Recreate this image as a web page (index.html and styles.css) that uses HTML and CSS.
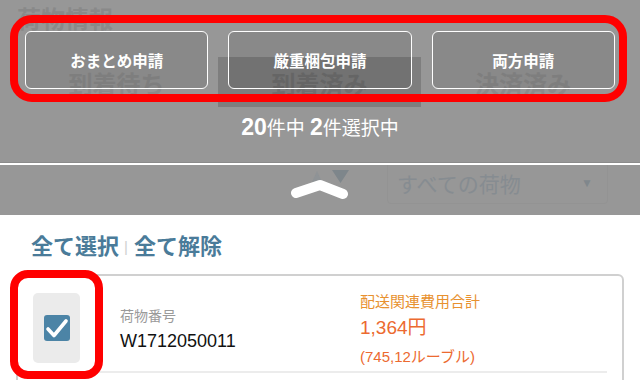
FILE: index.html
```html
<!DOCTYPE html>
<html lang="ja">
<head>
<meta charset="utf-8">
<title>荷物情報</title>
<link rel="stylesheet" href="styles.css">
</head>
<body>
<div class="page">
  <section class="top">
    <div class="ghost">
      <h1 class="ghost-title">荷物情報</h1>
      <div class="ghost-tabs">
        <div class="ghost-tab">到着待ち</div>
        <div class="ghost-tab active">到着済み</div>
        <div class="ghost-tab">決済済み</div>
      </div>
      <div class="ghost-filter">
        <svg class="sort-icon" width="40" height="16" viewBox="0 0 40 16">
          <polygon points="0,12 5,1 10,12" fill="#8f9396"/>
          <polygon points="20,0 37,0 28.5,13" fill="#7e868b"/>
        </svg>
        <div class="ghost-select">
          <span>すべての荷物</span>
          <span class="ghost-caret">▼</span>
        </div>
      </div>
    </div>
    <div class="overlay">
      <div class="actions">
        <button class="action">おまとめ申請</button>
        <button class="action">厳重梱包申請</button>
        <button class="action">両方申請</button>
      </div>
      <p class="count"><b>20</b>件中 <b>2</b>件選択中</p>
      <div class="divider"></div>
      <svg class="chevron" width="60" height="26" viewBox="0 0 60 26">
        <polyline points="6,15 30,7 53,16" fill="none" stroke="#fff" stroke-width="10" stroke-linecap="round" stroke-linejoin="round"/>
      </svg>
    </div>
    <div class="mark mark-actions"></div>
  </section>

  <section class="list">
    <div class="select-links">
      <a class="link">全て選択</a><span class="sep">|</span><a class="link">全て解除</a>
    </div>
    <div class="card">
      <div class="row">
        <div class="check-cell">
          <svg width="26" height="26" viewBox="0 0 26 26">
            <rect x="0" y="0" width="26" height="26" rx="3" fill="#4c84a6"/>
            <polyline points="4,14 10,20.5 22,6" fill="none" stroke="#fff" stroke-width="3.6" stroke-linecap="round" stroke-linejoin="round"/>
          </svg>
        </div>
        <div class="info-left">
          <div class="label">荷物番号</div>
          <div class="number">W1712050011</div>
        </div>
        <div class="info-right">
          <div class="fee-label">配送関連費用合計</div>
          <div class="fee">1,364円</div>
          <div class="fee-sub">(745,12ルーブル)</div>
        </div>
      </div>
    </div>
    <div class="mark mark-check"></div>
  </section>
</div>
</body>
</html>
```

FILE: styles.css
```css
* { box-sizing: border-box; }
html, body {
  margin: 0;
  padding: 0;
  width: 640px;
  height: 380px;
  overflow: hidden;
  background: #fff;
  font-family: "Liberation Sans", "Noto Sans CJK JP", sans-serif;
}
.page { width: 640px; height: 380px; overflow: hidden; }

/* ---------- top dimmed area ---------- */
.top {
  position: relative;
  height: 215px;
  background: #979797;
}
.ghost { display: flex; flex-direction: column; }
.ghost-title {
  margin: 0;
  padding: 4px 17px 0;
  font-size: 24px;
  line-height: 32px;
  font-weight: bold;
  color: #898989;
}
.ghost-tabs {
  margin: 21px 15px 0;
  height: 50px;
  display: grid;
  grid-template-columns: 203px 203px 204px;
}
.ghost-tab {
  display: flex;
  align-items: center;
  justify-content: center;
  font-size: 24px;
  font-weight: bold;
  color: #8b8b8b;
}
.ghost-tab.active { background: #7e7e7e; color: #707070; }
.ghost-filter {
  margin-top: 55px;
  height: 44px;
  display: flex;
  align-items: center;
  justify-content: flex-end;
  padding-right: 32px;
}
.sort-icon { margin-right: 35px; margin-top: -12px; }
.ghost-select {
  width: 221px;
  height: 42px;
  border: 1px solid #939393;
  border-radius: 4px;
  display: flex;
  align-items: center;
  justify-content: space-between;
  padding: 0 14px 0 9px;
  color: #868c91;
  font-size: 21px;
  margin-top: -2px;
}
.ghost-caret { font-size: 12px; color: #80878c; }

.overlay {
  position: absolute;
  inset: 0;
  display: flex;
  flex-direction: column;
  align-items: center;
  padding-top: 31px;
}
.actions {
  width: 100%;
  padding: 0 25px;
  display: grid;
  grid-template-columns: 1fr 1fr 1fr;
  column-gap: 20px;
}
.action {
  height: 58px;
  border: 1.5px solid #fff;
  border-radius: 6px;
  background: rgba(0, 0, 0, 0.09);
  color: #fff;
  font-family: "Noto Sans CJK JP", sans-serif;
  font-weight: bold;
  font-size: 15.5px;
  padding: 0;
}
.count {
  margin: 25px 0 0;
  line-height: 26px;
  color: #fff;
  font-size: 19px;
}
.count b { font-size: 23px; font-weight: bold; }
.divider {
  align-self: stretch;
  margin-top: 20px;
  height: 3px;
  border-top: 1px solid #8b8b8b;
  background: #fff;
}
.chevron { margin-top: 13px; }

.mark {
  position: absolute;
  border: 8px solid #ff0000;
  pointer-events: none;
}
.mark-actions {
  left: 10px;
  top: 15px;
  width: 617px;
  height: 87px;
  border-radius: 22px;
}

/* ---------- list ---------- */
.list { position: relative; padding-top: 17px; height: 165px; }
.select-links {
  padding-left: 31px;
  line-height: 30px;
  font-size: 22px;
  font-weight: bold;
  color: #4a7b99;
  display: flex;
  align-items: center;
}
.sep {
  color: #d0d0d0;
  font-weight: normal;
  font-size: 15px;
  margin: 0 6px 0 5px;
}
.card {
  margin: 12px 16px 0;
  height: 140px;
  border: 2px solid #d0d0d0;
  border-radius: 6px 6px 0 0;
}
.row {
  height: 97px;
  margin-right: 15px;
  border-bottom: 2px solid #ececec;
  display: flex;
  padding: 17px 0 0 15px;
}
.check-cell {
  width: 47px;
  height: 70px;
  background: #ebebeb;
  border-radius: 5px;
  display: flex;
  align-items: center;
  justify-content: center;
}
.info-left { width: 240px; margin-left: 40px; padding-top: 14px; }
.label { font-size: 14px; line-height: 18px; color: #9a9a9a; }
.number { margin-top: 4px; font-size: 18px; line-height: 24px; color: #111; }
.fee-label { font-size: 15px; line-height: 20px; color: #e8912f; margin-top: -1px; }
.fee { margin-top: 3px; font-size: 19px; line-height: 26px; color: #ec6a30; }
.fee-sub { margin-top: 6px; font-size: 15px; line-height: 20px; color: #ec6a30; }

.mark-check {
  left: 10px;
  top: 55px;
  width: 93px;
  height: 109px;
  border-radius: 18px;
}
```
